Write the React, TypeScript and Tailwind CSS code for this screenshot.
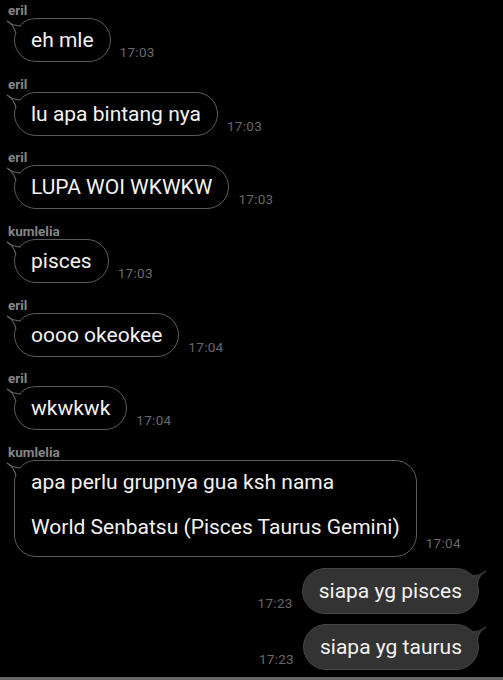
import React from 'react';

type Msg = {
  from: string;
  text: string[];
  time: string;
};

const incoming: Msg[] = [
  { from: 'eril', text: ['eh mle'], time: '17:03' },
  { from: 'eril', text: ['lu apa bintang nya'], time: '17:03' },
  { from: 'eril', text: ['LUPA WOI WKWKW'], time: '17:03' },
  { from: 'kumlelia', text: ['pisces'], time: '17:03' },
  { from: 'eril', text: ['oooo okeokee'], time: '17:04' },
  { from: 'eril', text: ['wkwkwk'], time: '17:04' },
  {
    from: 'kumlelia',
    text: ['apa perlu grupnya gua ksh nama', '', 'World Senbatsu (Pisces Taurus Gemini)'],
    time: '17:04',
  },
];

const outgoing = [
  { text: 'siapa yg pisces', time: '17:23' },
  { text: 'siapa yg taurus', time: '17:23' },
];

function LeftTail() {
  return (
    <svg className="absolute left-[-10px] top-[-2px] h-[24px] w-[24px] overflow-visible" viewBox="0 0 24 24">
      <path d="M2 4 Q8 9 16 9 L17 19 L11 17 Q9 8 2 4 Z" fill="#000" />
      <path d="M2 4 Q8 9 16 9" fill="none" stroke="#5c5c5c" strokeWidth="1.2" />
      <path d="M2 4 Q9 8 11 17" fill="none" stroke="#5c5c5c" strokeWidth="1.2" />
    </svg>
  );
}

function RightTail() {
  return (
    <svg className="absolute right-[-10px] top-[-2px] h-[24px] w-[24px] overflow-visible" viewBox="0 0 24 24">
      <path d="M22 4 Q16 9 8 9 L7 19 L13 17 Q15 8 22 4 Z" fill="#333333" />
      <path d="M22 4 Q16 9 8 9" fill="none" stroke="#444444" strokeWidth="1" />
      <path d="M22 4 Q15 8 13 17" fill="none" stroke="#444444" strokeWidth="1" />
    </svg>
  );
}

function Time({ value, className = '' }: { value: string; className?: string }) {
  return (
    <span className={`text-[13.5px] leading-[16px] tracking-[0.3px] text-[#686868] ${className}`}>{value}</span>
  );
}

export default function App() {
  return (
    <div className="flex h-[680px] w-full flex-col overflow-hidden bg-black font-['Roboto','Liberation_Sans',sans-serif] text-[#f2f2f2]">
      <div className="flex flex-col gap-[13.7px] pt-[2px]">
        {incoming.map((m, i) => {
          const multi = m.text.length > 1;
          return (
            <div key={i} className="flex flex-col">
              <div className="ml-[8px] text-[13.5px] font-bold leading-[16px] text-[#858585]">{m.from}</div>
              <div className="flex items-end">
                <div
                  className={`relative ml-[14px] rounded-[22px] border border-[#5c5c5c] bg-black px-[16px] text-[21px] ${
                    multi ? 'pb-[17px] pt-[10px] leading-[22.5px]' : 'py-[10px] leading-[22px]'
                  }`}
                >
                  <LeftTail />
                  {m.text.map((line, j) => (
                    <div key={j} className="whitespace-pre">
                      {line || '\u00a0'}
                    </div>
                  ))}
                </div>
                <Time value={m.time} className={`ml-[9px] ${multi ? 'mb-[6px]' : 'mb-[2px]'}`} />
              </div>
            </div>
          );
        })}
      </div>

      <div className="mt-[11px] flex flex-col items-end gap-[10px] pr-[24px]">
        {outgoing.map((m, i) => (
          <div key={i} className="flex items-end">
            <Time value={m.time} className="mb-[3px] mr-[9px]" />
            <div className="relative rounded-[23px] border border-[#444444] bg-[#333333] px-[16px] py-[11px] text-[21px] leading-[22px]">
              <RightTail />
              {m.text}
            </div>
          </div>
        ))}
      </div>

      <div className="mt-auto h-[3px] w-full bg-[#666666]" />
    </div>
  );
}
